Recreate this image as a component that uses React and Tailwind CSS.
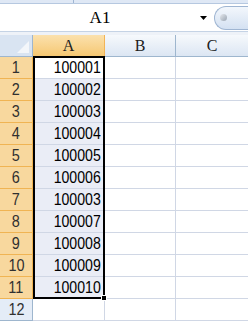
import React from "react";

const values = ["100001","100002","100003","100004","100005","100006","100003","100007","100008","100009","100010"];

const F = { fontFamily: '"Liberation Sans", Arial, sans-serif' };
const S = { fontFamily: '"Liberation Serif", serif' };

export default function App() {
  const rows = Array.from({ length: 12 }, (_, i) => i + 1);
  return (
    <div className="w-[248px] h-[322px] bg-white overflow-hidden relative" style={F}>
      {/* top toolbar remnant */}
      <div className="h-[4px] flex bg-[#dfe8f5] border-b border-[#b6c8e0]">
        <div className="w-[74px] border-r border-[#9fb6d3]" />
      </div>
      {/* name box row */}
      <div className="h-[28px] flex items-center bg-white border-b border-[#c5d3e5]">
        <div className="flex-1 text-center text-[17px] text-black leading-none pl-[8px]" style={S}>A1</div>
        <div className="w-[22px] flex justify-center">
          <svg width="7" height="4" viewBox="0 0 7 4"><path d="M0 0h7L3.5 4z" fill="#000" /></svg>
        </div>
        <div className="w-[34px] h-[24px] rounded-l-full border border-[#9fb5d2] border-r-0 bg-gradient-to-b from-[#f3f7fc] to-[#d4e1f2] flex items-center pl-[5px]">
          <div className="w-[7px] h-[7px] rounded-full bg-gradient-to-br from-[#e6e9ee] to-[#9aa5b2]" />
        </div>
      </div>
      <div className="h-[3px] bg-[#eef2f8]" />
      {/* grid */}
      <div className="relative">
        <div className="grid grid-cols-[33px_72px_71px_1fr]">
          {/* header row */}
          <div className="h-[22px] bg-[#d9e4f2] border-r border-b border-[#9eb6ce] relative">
            <svg className="absolute right-[3px] bottom-[3px]" width="12" height="12" viewBox="0 0 12 12"><path d="M12 0V12H0z" fill="#f3f6fa" /></svg>
          </div>
          <div className="h-[22px] bg-gradient-to-b from-[#fbe1ad] to-[#f6c872] border-r border-b border-[#f2b457] flex items-center justify-center text-[16px] text-[#202020]" style={S}>A</div>
          <div className="h-[22px] bg-gradient-to-b from-[#f6f9fc] to-[#dce6f3] border-r border-b border-[#9eb6ce] flex items-center justify-center text-[16px] text-[#202020]" style={S}>B</div>
          <div className="h-[22px] bg-gradient-to-b from-[#f6f9fc] to-[#dce6f3] border-b border-[#9eb6ce] flex items-center justify-center text-[16px] text-[#202020]" style={S}>C</div>
          {rows.map((r) => {
            const sel = r <= 11;
            return (
              <React.Fragment key={r}>
                <div className={sel
                  ? "h-[22px] bg-[#f8d89e] border-r border-b border-[#f0b453] flex items-center justify-center text-[17px] text-[#303030]"
                  : "h-[22px] bg-[#e4ecf7] border-r border-b border-[#9eb6ce] flex items-center justify-center text-[17px] text-[#303030]"}>
                  <span className="inline-block scale-x-[0.85]">{r}</span>
                </div>
                <div className={(sel ? (r === 1 ? "bg-white" : "bg-[#eaedf6]") : "bg-white") + " h-[22px] border-r border-b border-[#d0d7e5] flex items-center justify-end pr-[3px] text-[17px] text-black"}>
                  {sel ? <span className="inline-block scale-x-[0.83] origin-right">{values[r - 1]}</span> : null}
                </div>
                <div className="h-[22px] border-r border-b border-[#d0d7e5]" />
                <div className="h-[22px] border-b border-[#d0d7e5]" />
              </React.Fragment>
            );
          })}
        </div>
        {/* selection outline */}
        <div className="absolute left-[33px] top-[21px] w-[72px] h-[243px] border-2 border-black pointer-events-none" />
        <div className="absolute left-[101px] top-[260px] w-[6px] h-[6px] bg-black border border-white pointer-events-none" />
      </div>
    </div>
  );
}
